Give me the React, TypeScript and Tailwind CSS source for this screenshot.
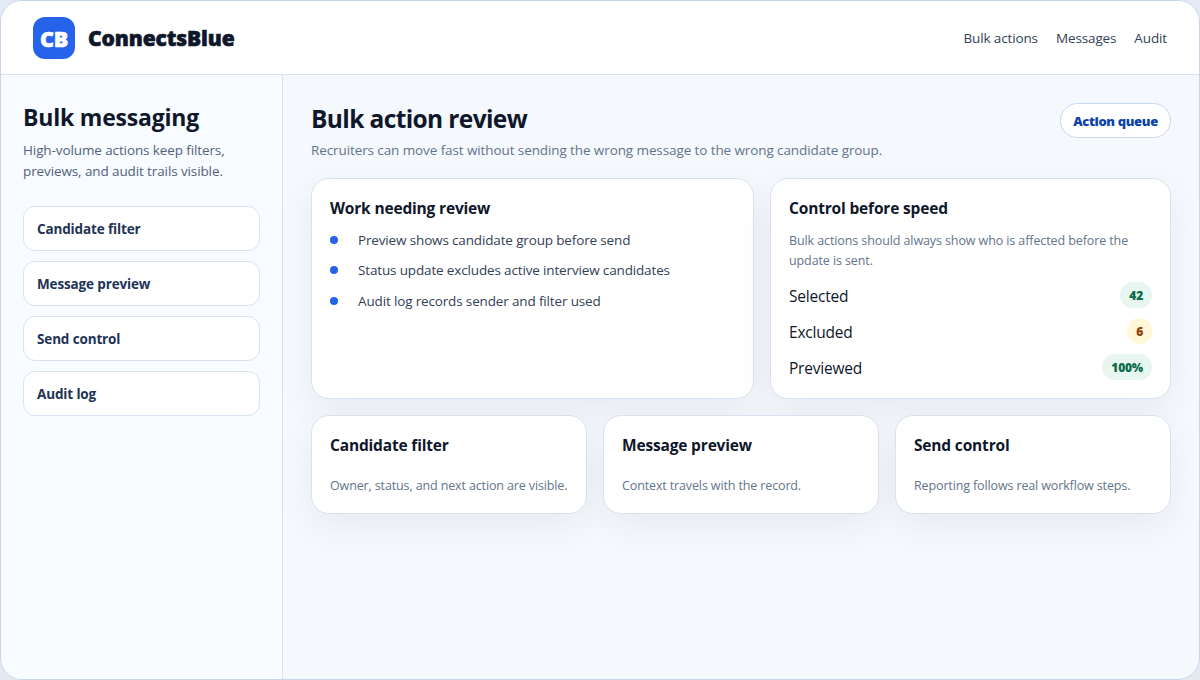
const navLinks = ["Bulk actions", "Messages", "Audit"];

const steps = ["Candidate filter", "Message preview", "Send control", "Audit log"];

const reviewItems = [
  "Preview shows candidate group before send",
  "Status update excludes active interview candidates",
  "Audit log records sender and filter used",
];

const stats = [
  { label: "Selected", value: "42", tone: "bg-[#e7f6ef] text-[#0b6b4b]" },
  { label: "Excluded", value: "6", tone: "bg-[#fff7d6] text-[#92400e]" },
  { label: "Previewed", value: "100%", tone: "bg-[#e7f6ef] text-[#0b6b4b]" },
];

const summaries = [
  { title: "Candidate filter", text: "Owner, status, and next action are visible." },
  { title: "Message preview", text: "Context travels with the record." },
  { title: "Send control", text: "Reporting follows real workflow steps." },
];

const card = "rounded-[18px] border border-[#d9e2f0] bg-white px-[18px] shadow-[0_12px_36px_rgba(15,23,42,0.06)]";
const cardTitle = "text-[15.5px] leading-[22px] font-bold tracking-[-0.17px]";

const Header = () => (
  <header className="flex h-[74px] shrink-0 items-center justify-between border-b border-[#d9e2f2] bg-white px-8">
    <div className="flex items-center gap-[13px] font-['Noto_Sans',sans-serif] font-black [-webkit-text-stroke:0.6px]">
      <div className="flex size-[42px] items-center justify-center rounded-xl bg-[#2563eb] pt-[3px] text-[21.5px] tracking-[-0.2px] text-white">
        CB
      </div>
      <span className="pt-[3px] text-[21px] tracking-[-0.12px]">ConnectsBlue</span>
    </div>
    <nav className="flex gap-[18px] pt-px text-[13.5px] tracking-[-0.13px] text-[#334155]">
      {navLinks.map((link) => (
        <a key={link}>{link}</a>
      ))}
    </nav>
  </header>
);

const Sidebar = () => (
  <aside className="w-[282px] shrink-0 border-r border-[#d9e2f2] bg-[#f8fbff] px-[22px] pt-[25px]">
    <h2 className="text-[23px] leading-[34px] font-bold tracking-[-0.2px]">Bulk messaging</h2>
    <p className="mt-1.5 text-[13.5px] leading-[21px] tracking-[-0.11px] whitespace-nowrap text-[#52627a]">
      High-volume actions keep filters,
      <br />
      previews, and audit trails visible.
    </p>
    <div className="mt-6 flex flex-col gap-2.5">
      {steps.map((step) => (
        <div
          key={step}
          className="flex h-[45px] items-center rounded-xl border border-[#d9e2f0] bg-white px-[13px] pt-0.5 text-[13.5px] font-bold tracking-[-0.14px] text-[#1e3355]"
        >
          {step}
        </div>
      ))}
    </div>
  </aside>
);

export default function App() {
  return (
    <div className="h-[680px] w-[1200px] overflow-hidden bg-[#e3eaf4] font-['Open_Sans',sans-serif] text-[#0f172a]">
      <div className="flex h-full flex-col overflow-hidden rounded-[22px] border border-[#c8d5ea] bg-[#f5f8fd]">
        <Header />
        <div className="flex min-h-0 flex-1">
          <Sidebar />
          <main className="flex-1 px-7 pt-7">
            <div className="flex items-start justify-between">
              <div>
                <h1 className="text-[24.5px] leading-8 font-bold tracking-[-0.62px]">Bulk action review</h1>
                <p className="mt-[5px] text-[13.5px] leading-[21px] tracking-[-0.1px] text-[#64748b]">
                  Recruiters can move fast without sending the wrong message to the wrong candidate group.
                </p>
              </div>
              <div className="flex h-[35px] w-[111px] items-center justify-center rounded-full border border-[#c8d7f2] bg-white pt-0.5 text-[13px] font-extrabold tracking-[-0.35px] whitespace-nowrap text-[#0b43a8]">
                Action queue
              </div>
            </div>

            <div className="mt-[17px] grid grid-cols-[443px_401px] gap-4">
              <section className={`h-[221px] pt-[18px] ${card}`}>
                <h3 className={cardTitle}>Work needing review</h3>
                <ul className="mt-[10px] flex flex-col gap-[9.5px] text-[13.5px] leading-[21px] tracking-[-0.15px] text-[#334155]">
                  {reviewItems.map((item) => (
                    <li key={item} className="flex h-[21px] items-center gap-5 whitespace-nowrap">
                      <span className="size-2 rounded-full bg-[#2563eb]" />
                      <span className="pt-px">{item}</span>
                    </li>
                  ))}
                </ul>
              </section>

              <section className={`h-[221px] pt-[18px] ${card}`}>
                <h3 className={cardTitle}>Control before speed</h3>
                <p className="mt-3 text-[12.5px] leading-5 tracking-[-0.1px] whitespace-nowrap text-[#64748b]">
                  Bulk actions should always show who is affected before the
                  <br />
                  update is sent.
                </p>
                <div className="mt-[11px] flex flex-col gap-2.5">
                  {stats.map((stat) => (
                    <div key={stat.label} className="flex h-[26px] items-center justify-between">
                      <span className="pt-[3px] text-[15.5px] tracking-[-0.2px]">{stat.label}</span>
                      <span
                        className={`flex h-[26px] items-center rounded-full px-[9px] pt-0.5 text-xs font-extrabold tracking-[-0.2px] ${stat.tone}`}
                      >
                        {stat.value}
                      </span>
                    </div>
                  ))}
                </div>
              </section>
            </div>

            <div className="mt-4 grid grid-cols-3 gap-4">
              {summaries.map((item) => (
                <section key={item.title} className={`h-[99px] pt-[18px] ${card}`}>
                  <h3 className={cardTitle}>{item.title}</h3>
                  <p className="mt-5 text-[12.5px] leading-5 tracking-[-0.13px] whitespace-nowrap text-[#64748b]">
                    {item.text}
                  </p>
                </section>
              ))}
            </div>
          </main>
        </div>
      </div>
    </div>
  );
}
